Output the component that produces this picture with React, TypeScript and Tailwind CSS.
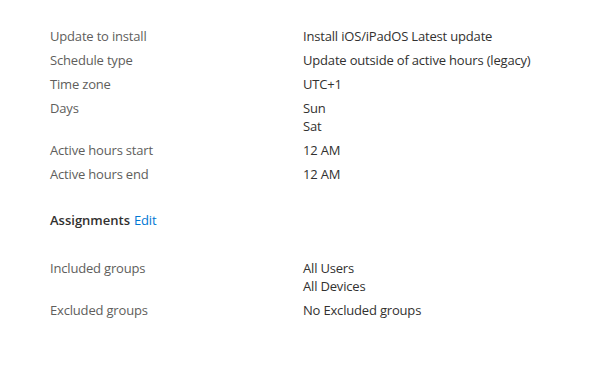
import React from "react";

const Row = ({ label, values }: { label: string; values: string[] }) => (
  <div className="flex">
    <div className="w-[253px] shrink-0 text-[#605e5c]">{label}</div>
    <div className="flex flex-col text-[#323130]">
      {values.map((v) => (
        <div key={v}>{v}</div>
      ))}
    </div>
  </div>
);

export default function App() {
  return (
    <div
      className="w-[595px] h-[379px] bg-white pl-[50px] pt-[27px] text-[13px] leading-[18px] tracking-[-0.18px]"
      style={{ fontFamily: '"Open Sans", "Noto Sans", sans-serif' }}
    >
      <div className="flex flex-col gap-[6px]">
        <Row label="Update to install" values={["Install iOS/iPadOS Latest update"]} />
        <Row label="Schedule type" values={["Update outside of active hours (legacy)"]} />
        <Row label="Time zone" values={["UTC+1"]} />
        <Row label="Days" values={["Sun", "Sat"]} />
        <Row label="Active hours start" values={["12 AM"]} />
        <Row label="Active hours end" values={["12 AM"]} />
      </div>
      <div className="mt-[28px] flex gap-[4px]">
        <span className="font-semibold text-[#323130] tracking-normal">Assignments</span>
        <span className="text-[#0078d4]">Edit</span>
      </div>
      <div className="mt-[30px] flex flex-col gap-[6px]">
        <Row label="Included groups" values={["All Users", "All Devices"]} />
        <Row label="Excluded groups" values={["No Excluded groups"]} />
      </div>
    </div>
  );
}
